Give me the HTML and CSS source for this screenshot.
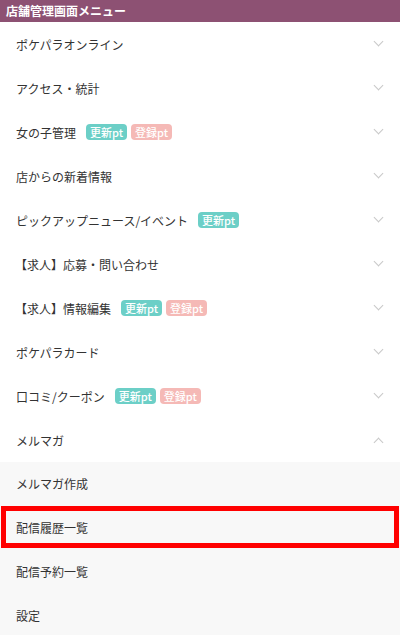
FILE: index.html
```html
<!DOCTYPE html>
<html lang="ja">
<head>
<meta charset="utf-8">
<link rel="stylesheet" href="styles.css">
</head>
<body>
<div class="menu">
  <div class="menu-title">店舗管理画面メニュー</div>
  <div class="item"><span class="label">ポケパラオンライン</span><span class="chev down"></span></div>
  <div class="item"><span class="label">アクセス・統計</span><span class="chev down"></span></div>
  <div class="item"><span class="label">女の子管理</span><span class="badge upd">更新pt</span><span class="badge reg">登録pt</span><span class="chev down"></span></div>
  <div class="item"><span class="label">店からの新着情報</span><span class="chev down"></span></div>
  <div class="item"><span class="label">ピックアップニュース/イベント</span><span class="badge upd">更新pt</span><span class="chev down"></span></div>
  <div class="item"><span class="label bracket">【求人】応募・問い合わせ</span><span class="chev down"></span></div>
  <div class="item"><span class="label bracket">【求人】情報編集</span><span class="badge upd">更新pt</span><span class="badge reg">登録pt</span><span class="chev down"></span></div>
  <div class="item"><span class="label">ポケパラカード</span><span class="chev down"></span></div>
  <div class="item"><span class="label">口コミ/クーポン</span><span class="badge upd">更新pt</span><span class="badge reg">登録pt</span><span class="chev down"></span></div>
  <div class="item"><span class="label">メルマガ</span><span class="chev up"></span></div>
  <div class="sub">
    <div class="sub-item">メルマガ作成</div>
    <div class="sub-item current">配信履歴一覧</div>
    <div class="sub-item">配信予約一覧</div>
    <div class="sub-item">設定</div>
  </div>
</div>
</body>
</html>
```
FILE: styles.css
```css
html, body {
  margin: 0;
  padding: 0;
  background: #ffffff;
}
body {
  font-family: "Noto Sans CJK JP", "Noto Sans", sans-serif;
  color: #333333;
}
.menu {
  width: 400px;
}
.menu-title {
  height: 22px;
  line-height: 22px;
  background: #8d5173;
  color: #ffffff;
  font-weight: bold;
  font-size: 12px;
  padding-left: 6px;
}
.item {
  height: 44px;
  display: flex;
  align-items: center;
  padding: 0 17px 0 16px;
  font-size: 12px;
}
.label {
  margin-right: 10px;
}
.label.bracket {
  margin-left: -1px;
}
.badge {
  display: inline-flex;
  align-items: center;
  justify-content: center;
  height: 16px;
  padding: 0 4px;
  border-radius: 4px;
  color: #ffffff;
  font-size: 11px;
  font-weight: 500;
  margin-right: 4px;
}
.badge.upd {
  background: #6ccfc7;
}
.badge.reg {
  background: #f5b9b6;
}
.chev {
  margin-left: auto;
  width: 7px;
  height: 7px;
  border-right: 1px solid #c8c8c8;
  border-bottom: 1px solid #c8c8c8;
  box-sizing: border-box;
}
.chev.down {
  transform: translate(-1px, -3px) rotate(45deg);
}
.chev.up {
  transform: translate(-1px, 2px) rotate(-135deg);
}
.sub {
  background: #f8f8f8;
}
.sub-item {
  height: 44px;
  line-height: 44px;
  padding-left: 16px;
  font-size: 12px;
  position: relative;
}
.sub-item.current::after {
  content: "";
  position: absolute;
  left: 1px;
  right: 1px;
  top: 0;
  height: 42px;
  border: 5px solid #ff0000;
  box-sizing: border-box;
}
```
